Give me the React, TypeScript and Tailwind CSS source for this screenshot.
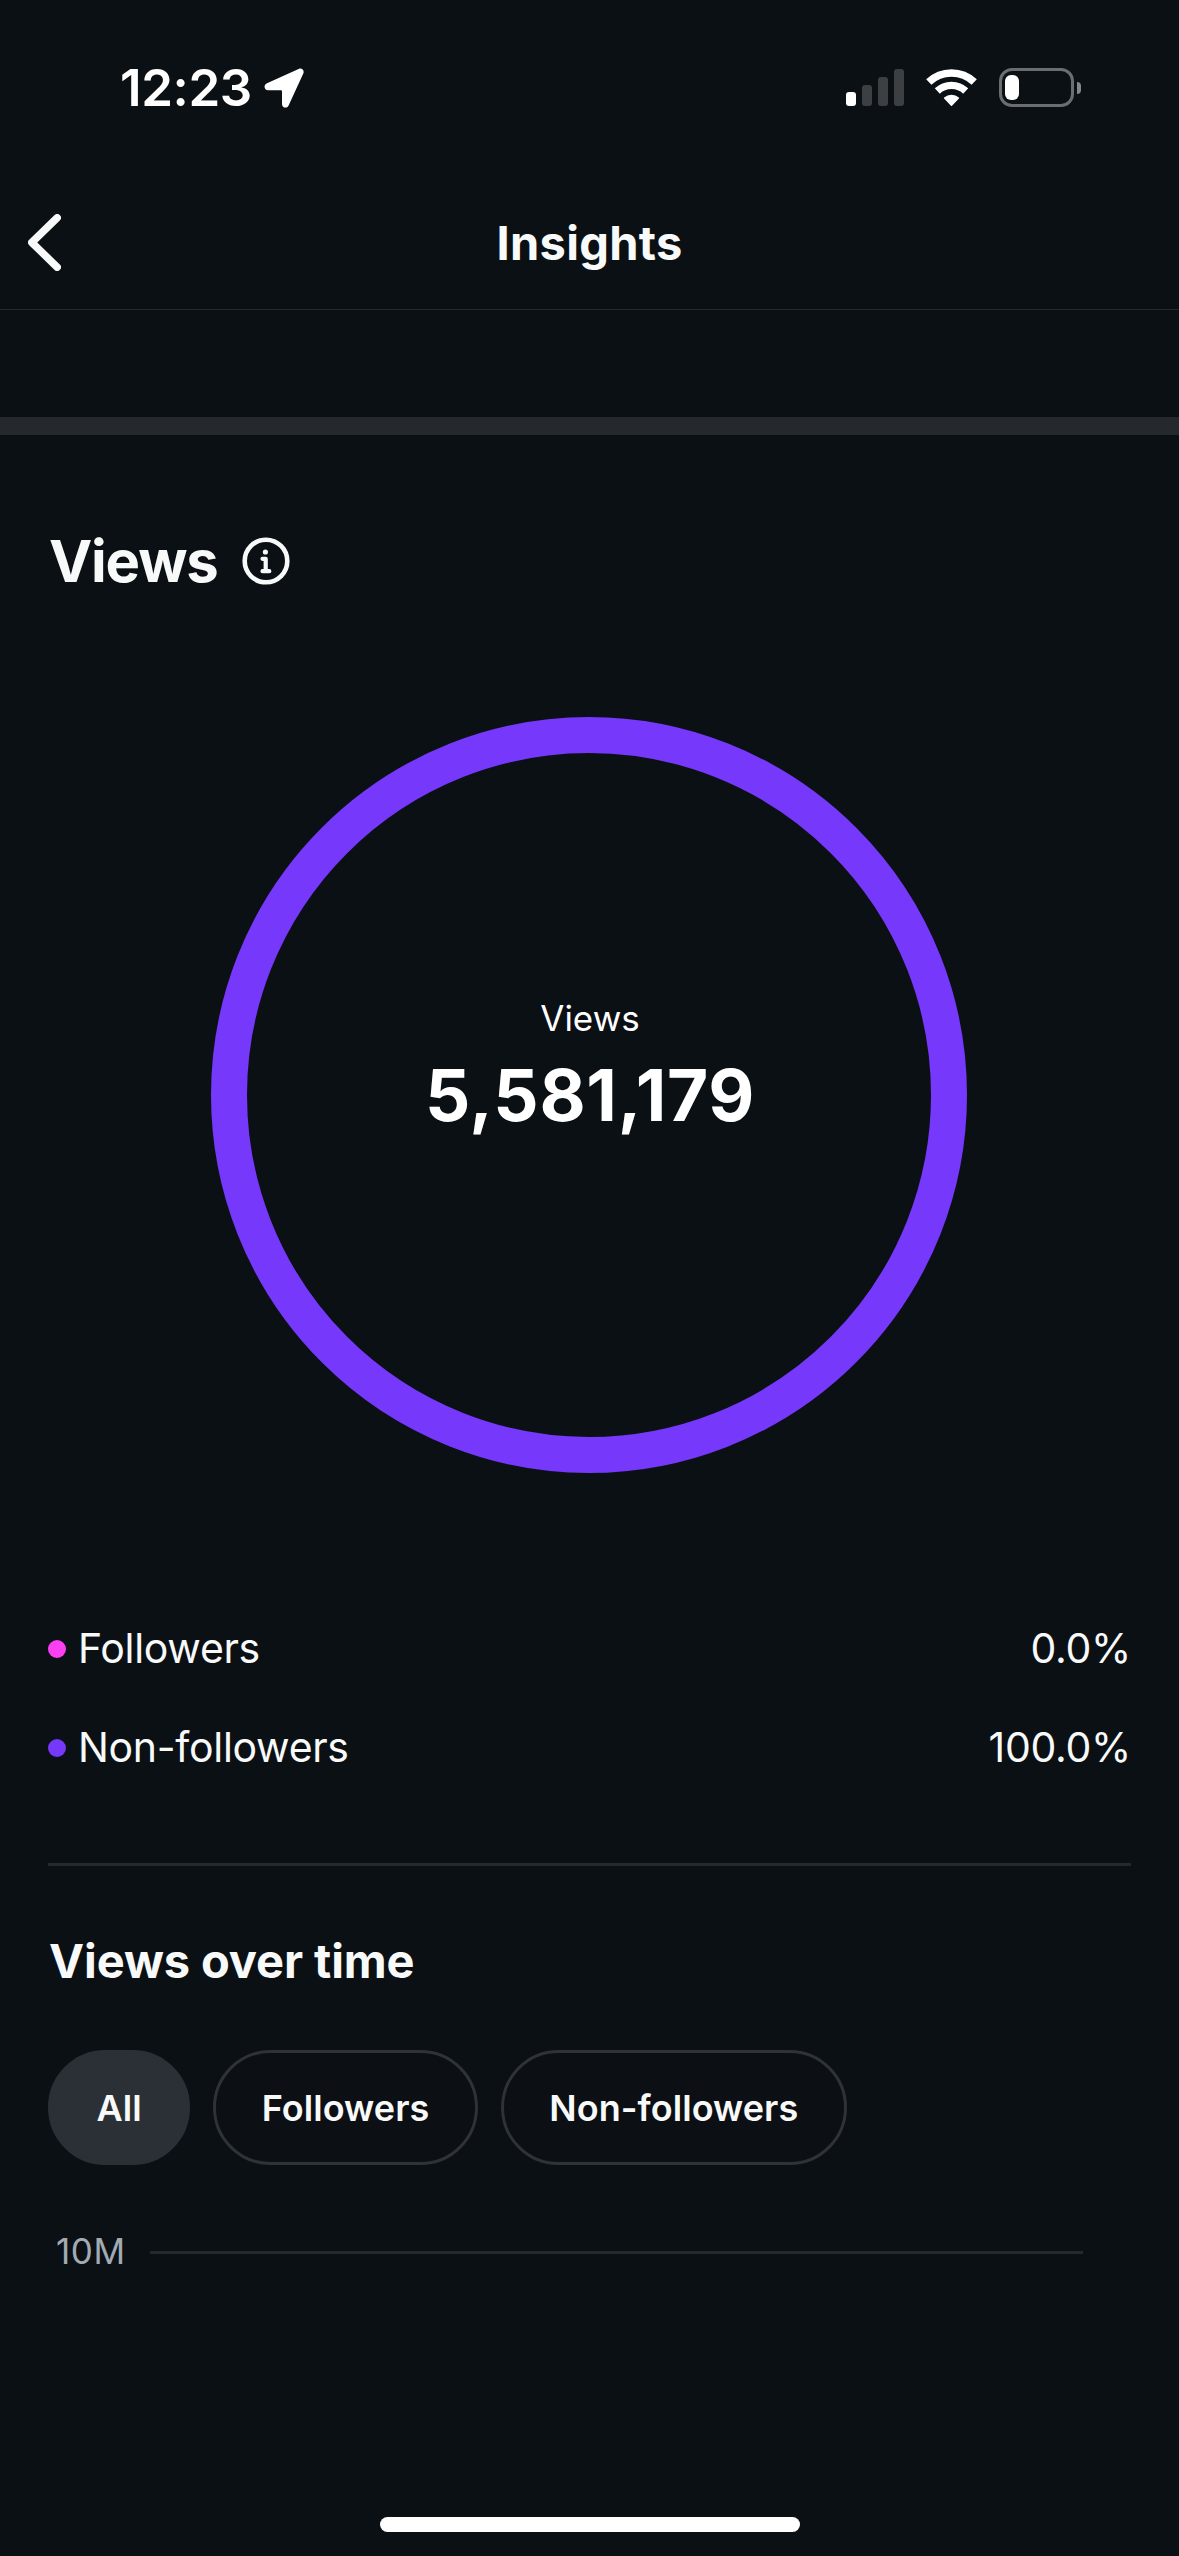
import { useState } from 'react';

const audience = [
    { label: 'Followers', value: '0.0%', dot: 'bg-[#fb3ff2]' },
    { label: 'Non-followers', value: '100.0%', dot: 'bg-[#7638fa]' },
];

const filters = ['All', 'Followers', 'Non-followers'];

function StatusBar() {
    return (
        <div className="flex h-[175px] shrink-0 items-center justify-between pl-[120px] pr-[98px] text-white">
            <div className="flex items-center gap-[12px]">
                <span className="text-[51px] leading-none font-semibold tracking-[-0.4px]">12:23</span>
                <svg width="40" height="40" viewBox="0 0 40 40" fill="currentColor">
                    <path d="M34.6.9 3 15.3C-.9 17 .1 22.2 4.2 22.2H17a1 1 0 0 1 1 1V36c0 4 4.900 5 6.600 1.400L39.300 5.600C40.700 2.400 37.800-.5 34.600.9Z" />
                </svg>
            </div>
            <div className="flex items-center">
                {/* Signal */}
                <div className="flex h-[37px] items-end gap-[6px]">
                    <div className="h-[14px] w-[10px] rounded-[3px] bg-white" />
                    <div className="h-[21px] w-[10px] rounded-[3px] bg-[#3c4043]" />
                    <div className="h-[29px] w-[10px] rounded-[3px] bg-[#3c4043]" />
                    <div className="h-[37px] w-[10px] rounded-[3px] bg-[#3c4043]" />
                </div>
                {/* Wifi */}
                <svg className="ml-[22px]" width="51" height="38" viewBox="0 0 51 38" fill="none" stroke="currentColor">
                    <path d="M2.800 13.100a33 33 0 0 1 45.400 0" strokeWidth="7.600" />
                    <path d="M11.300 22a20.700 20.700 0 0 1 28.400 0" strokeWidth="7.400" />
                    <path d="M18.600 29a11 11 0 0 1 13.800 0l-6.900 7.200Z" fill="currentColor" strokeWidth="1.500" strokeLinejoin="round" />
                </svg>
                {/* Battery */}
                <div className="ml-[22px] h-[39px] w-[75px] rounded-[13px] border-[3px] border-[#6b6e71] p-[3px] pt-[4px]">
                    <div className="h-[25px] w-[14px] rounded-[6px] bg-white" />
                </div>
                <div className="ml-[3px] h-[12px] w-[4px] rounded-r-full bg-[#85888a]" />
            </div>
        </div>
    );
}

function Header() {
    return (
        <div className="grid h-[135px] shrink-0 grid-cols-[1fr_auto_1fr] items-center border-b border-[#25282d]">
            <button className="ml-[28px] w-[33px]" aria-label="Back">
                <svg width="33" height="57" viewBox="0 0 33 57" fill="none" stroke="currentColor" strokeWidth="7.500" strokeLinecap="round" strokeLinejoin="round">
                    <path d="M29.200 3.800 3.800 28.500l25.400 24.700" />
                </svg>
            </button>
            <h1 className="pt-[1px] text-[47px] leading-none font-bold tracking-[0.3px]">Insights</h1>
        </div>
    );
}

function InfoIcon() {
    return (
        <svg width="48" height="48" viewBox="0 0 48 48" fill="none" stroke="currentColor" strokeLinecap="round" strokeLinejoin="round">
            <circle cx="24" cy="24" r="21.300" strokeWidth="4.600" />
            <circle cx="23.400" cy="15" r="2.600" fill="currentColor" stroke="none" />
            <path d="M20.500 21.800h3.200v12.400M20.500 34.200h6.800" strokeWidth="4.200" />
        </svg>
    );
}

export default function App() {
    const [active, setActive] = useState('All');

    return (
        <div className="flex h-[2556px] w-[1179px] flex-col overflow-hidden bg-[#0b1014] font-['Inter','Liberation_Sans',sans-serif] text-[#f8f9f9]">
            <StatusBar />
            <Header />
            <div className="mt-[107px] h-[18px] shrink-0 bg-[#25282d]" />

            <main className="flex flex-1 flex-col px-[48px]">
                <div className="mt-[90px] flex h-[72px] items-center gap-[24px] pl-[1px]">
                    <h2 className="text-[58px] leading-none font-bold tracking-[-1.2px]">Views</h2>
                    <InfoIcon />
                </div>

                {/* Views ring */}
                <div className="mt-[120px] mr-[1px] flex size-[756px] flex-col items-center self-center rounded-full border-[36px] border-[#7638fa] pl-[2px] text-white">
                    <span className="mt-[245px] text-[35px] leading-[40px]">Views</span>
                    <span className="mt-[17px] text-[71px] leading-[80px] font-bold tracking-[0.7px]">5,581,179</span>
                </div>

                {/* Breakdown */}
                <div className="mt-[126px] flex flex-col">
                    {audience.map((row) => (
                        <div key={row.label} className="flex h-[99px] items-center text-[41px] tracking-[-0.3px]">
                            <span className={`size-[18px] rounded-full ${row.dot}`} />
                            <span className="ml-[12px]">{row.label}</span>
                            <span className="ml-auto">{row.value}</span>
                        </div>
                    ))}
                </div>
                <div className="mt-[66px] h-[3px] bg-[#25282d]" />

                <h3 className="mt-[65px] pl-[1px] text-[47px] leading-[60px] font-bold tracking-[-0.1px]">Views over time</h3>
                <div className="mt-[59px] flex gap-[23px]">
                    {filters.map((name) => (
                        <button
                            key={name}
                            onClick={() => setActive(name)}
                            className={`h-[115px] rounded-full border-[3px] px-[45.5px] text-[36px] font-semibold tracking-[0.05px] ${
                                active === name ? 'border-[#2b3036] bg-[#2b3036]' : 'border-[#2f3237] bg-[#0c0f14]'
                            }`}
                        >
                            {name}
                        </button>
                    ))}
                </div>

                {/* Chart axis */}
                <div className="mt-[66px] flex h-[42px] items-center pr-[48px] pl-[8px]">
                    <span className="w-[94px] pb-[2px] text-[35px] leading-none tracking-[0.6px] text-[#a2aab4]">10M</span>
                    <div className="mt-[1px] h-[3px] flex-1 bg-[#25282d]" />
                </div>
            </main>

            <div className="mb-[24px] h-[15px] w-[420px] shrink-0 self-center rounded-full bg-white" />
        </div>
    );
}
